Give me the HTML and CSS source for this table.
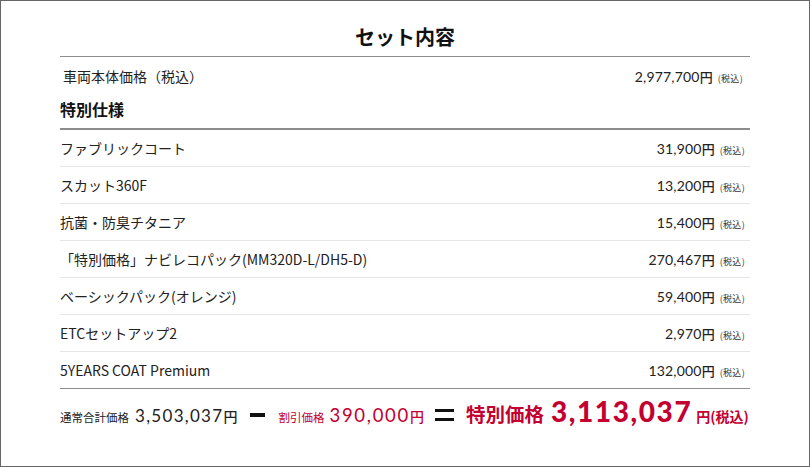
FILE: index.html
```html
<!DOCTYPE html>
<html lang="ja">
<head>
<meta charset="utf-8">
<title>セット内容</title>
<link rel="stylesheet" href="styles.css">
</head>
<body>
<div class="sheet">
  <h1 class="title">セット内容</h1>
  <div class="table">
    <div class="row base">
      <span class="label">車両本体価格（税込）</span>
      <span class="price"><span class="num">2,977,700</span><span class="yen">円</span><span class="tax">(税込)</span></span>
    </div>
    <h2 class="section">特別仕様</h2>
    <ul class="items">
      <li class="row"><span class="label">ファブリックコート</span><span class="price"><span class="num">31,900</span><span class="yen">円</span><span class="tax">(税込)</span></span></li>
      <li class="row"><span class="label">スカット360F</span><span class="price"><span class="num">13,200</span><span class="yen">円</span><span class="tax">(税込)</span></span></li>
      <li class="row"><span class="label">抗菌・防臭チタニア</span><span class="price"><span class="num">15,400</span><span class="yen">円</span><span class="tax">(税込)</span></span></li>
      <li class="row"><span class="label">「特別価格」ナビレコパック(MM320D-L/DH5-D)</span><span class="price"><span class="num">270,467</span><span class="yen">円</span><span class="tax">(税込)</span></span></li>
      <li class="row"><span class="label">ベーシックパック(オレンジ)</span><span class="price"><span class="num">59,400</span><span class="yen">円</span><span class="tax">(税込)</span></span></li>
      <li class="row"><span class="label">ETCセットアップ2</span><span class="price"><span class="num">2,970</span><span class="yen">円</span><span class="tax">(税込)</span></span></li>
      <li class="row"><span class="label">5YEARS COAT Premium</span><span class="price"><span class="num">132,000</span><span class="yen">円</span><span class="tax">(税込)</span></span></li>
    </ul>
  </div>
  <div class="summary"><span class="s-label">通常合計価格</span><span class="s-num">3,503,037</span><span class="s-yen">円</span><span class="minus" aria-label="マイナス"></span><span class="s-label red disc">割引価格</span><span class="s-num red-num">390,000</span><span class="s-yen red">円</span><span class="equals" aria-label="イコール"></span><span class="final-label">特別価格</span><span class="final-num">3,113,037</span><span class="final-yen">円(税込)</span></div>
</div>
</body>
</html>
```

FILE: styles.css
```css
html, body {
  margin: 0;
  padding: 0;
  background: #fff;
}

body {
  font-family: "Noto Sans CJK JP", "Noto Sans", sans-serif;
  color: #222;
}

.sheet {
  box-sizing: border-box;
  width: 810px;
  height: 467px;
  border: 1px solid #666;
  padding: 0 59px;
}

.title {
  margin: 0;
  padding: 26px 0 9px;
  font-size: 20px;
  line-height: 20px;
  font-weight: 700;
  text-align: center;
  color: #111;
}

.table {
  border-top: 1px solid #8c8c8c;
}

.row {
  display: flex;
  align-items: center;
  justify-content: space-between;
  height: 36px;
  border-bottom: 1px solid #e6e6e6;
  padding: 0 5px 0 0;
}

.row.base {
  height: 38px;
  border-bottom: none;
  padding-left: 3px;
  padding-right: 7px;
}

.label {
  font-size: 14px;
  line-height: 16px;
  color: #222;
}

.price {
  display: flex;
  align-items: baseline;
  white-space: nowrap;
}

.num {
  font-family: Lato, "Noto Sans", sans-serif;
  font-size: 14px;
  letter-spacing: 0.2px;
  color: #222;
}

.yen {
  font-size: 13px;
  font-weight: 500;
  color: #222;
}

.tax {
  font-size: 9px;
  margin-left: 5px;
  color: #333;
  letter-spacing: 0.3px;
}

.section {
  margin: 0;
  padding: 6px 0 11px;
  font-size: 16px;
  line-height: 16px;
  font-weight: 700;
  color: #111;
  border-bottom: 2px solid #8c8c8c;
}

.items {
  list-style: none;
  margin: 0;
  padding: 0;
}

.items .row:last-child {
  border-bottom-color: #8c8c8c;
}

.summary {
  white-space: nowrap;
  padding-top: 7px;
  line-height: 30px;
  color: #222;
}

.s-label {
  font-size: 11.5px;
  color: #222;
}

.s-num {
  font-family: Lato, "Noto Sans", sans-serif;
  font-size: 17px;
  letter-spacing: 1.3px;
  margin-left: 6px;
  color: #222;
}

.s-num.red-num {
  font-size: 18.5px;
  letter-spacing: 1.7px;
  margin-left: 5px;
  color: #c3002f;
}

.s-yen {
  font-size: 14px;
  font-weight: 500;
  color: #222;
}

.red {
  color: #c3002f;
}

.disc {
  margin-left: 13px;
}

.minus {
  display: inline-block;
  width: 15px;
  height: 4px;
  background: #111;
  margin-left: 13px;
  vertical-align: 5px;
}

.equals {
  display: inline-block;
  box-sizing: border-box;
  width: 19px;
  height: 12px;
  border-top: 3px solid #111;
  border-bottom: 3px solid #111;
  margin-left: 11px;
  vertical-align: 1px;
}

.final-label {
  font-size: 19.5px;
  font-weight: 700;
  color: #c3002f;
  margin-left: 12px;
}

.final-num {
  font-family: Lato, "Noto Sans", sans-serif;
  font-size: 28px;
  font-weight: 900;
  letter-spacing: 1.6px;
  color: #c3002f;
  margin-left: 7px;
}

.final-yen {
  font-size: 14px;
  font-weight: 700;
  color: #c3002f;
  margin-left: 4px;
}
```
